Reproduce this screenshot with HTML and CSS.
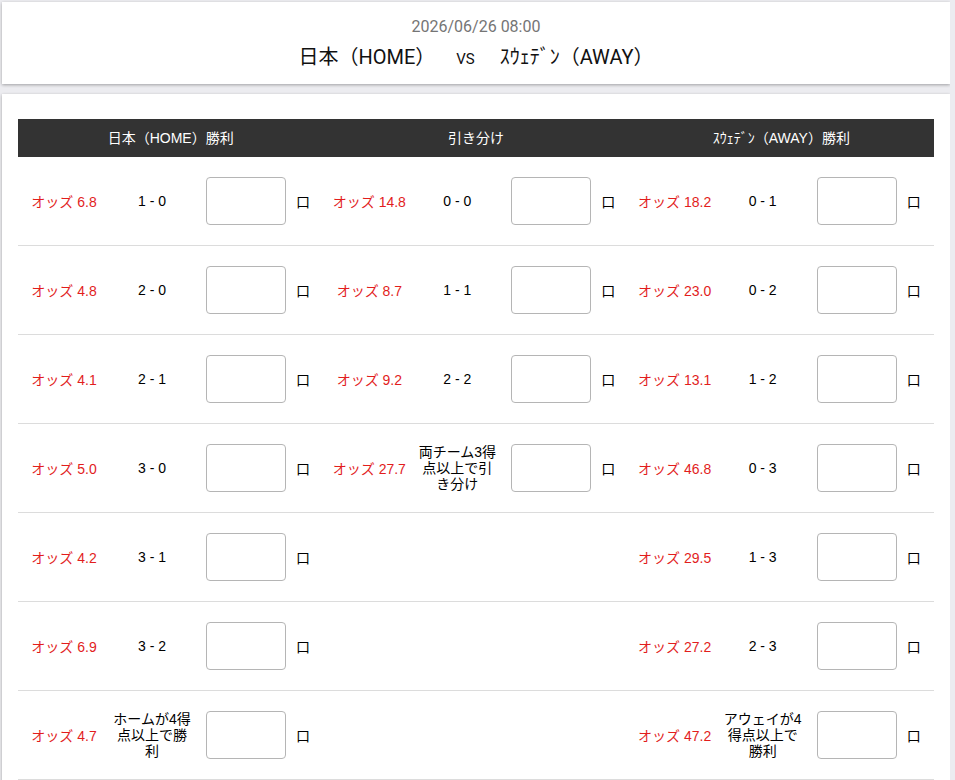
FILE: index.html
```html
<!DOCTYPE html>
<html lang="ja">
<head>
<meta charset="utf-8">
<title>日本 vs スウェーデン</title>
<link rel="stylesheet" href="styles.css">
</head>
<body>
<div class="card match">
  <div class="date">2026/06/26 08:00</div>
  <div class="teams"><span class="team">日本（HOME）</span><span class="vs">VS</span><span class="team">ｽｳｪﾃﾞﾝ（AWAY）</span></div>
</div>
<div class="card board">
  <div class="thead">
    <div class="th">日本（HOME）勝利</div>
    <div class="th">引き分け</div>
    <div class="th">ｽｳｪﾃﾞﾝ（AWAY）勝利</div>
  </div>

  <div class="row">
    <div class="grp"><div class="odds">オッズ 6.8</div><div class="score">1 - 0</div><div class="inp"><div class="box"></div></div><div class="chk">口</div></div>
    <div class="grp"><div class="odds">オッズ 14.8</div><div class="score">0 - 0</div><div class="inp"><div class="box"></div></div><div class="chk">口</div></div>
    <div class="grp"><div class="odds">オッズ 18.2</div><div class="score">0 - 1</div><div class="inp"><div class="box"></div></div><div class="chk">口</div></div>
  </div>
  <div class="row">
    <div class="grp"><div class="odds">オッズ 4.8</div><div class="score">2 - 0</div><div class="inp"><div class="box"></div></div><div class="chk">口</div></div>
    <div class="grp"><div class="odds">オッズ 8.7</div><div class="score">1 - 1</div><div class="inp"><div class="box"></div></div><div class="chk">口</div></div>
    <div class="grp"><div class="odds">オッズ 23.0</div><div class="score">0 - 2</div><div class="inp"><div class="box"></div></div><div class="chk">口</div></div>
  </div>
  <div class="row">
    <div class="grp"><div class="odds">オッズ 4.1</div><div class="score">2 - 1</div><div class="inp"><div class="box"></div></div><div class="chk">口</div></div>
    <div class="grp"><div class="odds">オッズ 9.2</div><div class="score">2 - 2</div><div class="inp"><div class="box"></div></div><div class="chk">口</div></div>
    <div class="grp"><div class="odds">オッズ 13.1</div><div class="score">1 - 2</div><div class="inp"><div class="box"></div></div><div class="chk">口</div></div>
  </div>
  <div class="row">
    <div class="grp"><div class="odds">オッズ 5.0</div><div class="score">3 - 0</div><div class="inp"><div class="box"></div></div><div class="chk">口</div></div>
    <div class="grp"><div class="odds">オッズ 27.7</div><div class="score">両チーム3得点以上で引き分け</div><div class="inp"><div class="box"></div></div><div class="chk">口</div></div>
    <div class="grp"><div class="odds">オッズ 46.8</div><div class="score">0 - 3</div><div class="inp"><div class="box"></div></div><div class="chk">口</div></div>
  </div>
  <div class="row">
    <div class="grp"><div class="odds">オッズ 4.2</div><div class="score">3 - 1</div><div class="inp"><div class="box"></div></div><div class="chk">口</div></div>
    <div class="grp"></div>
    <div class="grp"><div class="odds">オッズ 29.5</div><div class="score">1 - 3</div><div class="inp"><div class="box"></div></div><div class="chk">口</div></div>
  </div>
  <div class="row">
    <div class="grp"><div class="odds">オッズ 6.9</div><div class="score">3 - 2</div><div class="inp"><div class="box"></div></div><div class="chk">口</div></div>
    <div class="grp"></div>
    <div class="grp"><div class="odds">オッズ 27.2</div><div class="score">2 - 3</div><div class="inp"><div class="box"></div></div><div class="chk">口</div></div>
  </div>
  <div class="row">
    <div class="grp"><div class="odds">オッズ 4.7</div><div class="score">ホームが4得点以上で勝利</div><div class="inp"><div class="box"></div></div><div class="chk">口</div></div>
    <div class="grp"></div>
    <div class="grp"><div class="odds">オッズ 47.2</div><div class="score">アウェイが4得点以上で勝利</div><div class="inp"><div class="box"></div></div><div class="chk">口</div></div>
  </div>
</div>
</body>
</html>
```

FILE: styles.css
```css
html, body {
  margin: 0;
  padding: 0;
}
body {
  background: #ececf0;
  padding: 2px 0 0 2px;
  width: 948px;
  font-family: "Liberation Sans", "Noto Sans CJK JP", sans-serif;
  color: #000;
}
.card {
  background: #fff;
  box-shadow: 0 1px 3px rgba(0, 0, 0, 0.32);
}
.match {
  height: 82px;
  box-sizing: border-box;
  padding-top: 15px;
  text-align: center;
  font-family: Roboto, "Noto Sans CJK JP", sans-serif;
}
.date {
  font-size: 16px;
  line-height: 20px;
  color: #757575;
}
.teams {
  margin-top: 6px;
  font-size: 20px;
  line-height: 28px;
  color: #111;
}
.vs {
  font-size: 15px;
  margin: 0 25px 0 21px;
}
.board {
  margin-top: 10px;
  padding: 25px 16px 0 16px;
  height: 700px;
}
.thead {
  display: grid;
  grid-template-columns: 1fr 1fr 1fr;
  height: 38px;
  box-sizing: border-box;
  padding-bottom: 3px;
  background: #333;
  color: #fff;
  font-size: 14px;
}
.th {
  display: flex;
  align-items: center;
  justify-content: center;
}
.row {
  display: grid;
  grid-template-columns: 1fr 1fr 1fr;
  height: 89px;
  box-sizing: border-box;
  border-bottom: 1px solid #dcdcdc;
  font-size: 14px;
}
.grp {
  display: flex;
  align-items: center;
}
.odds {
  width: 92px;
  text-align: center;
  color: #e21d1d;
}
.score {
  width: 84px;
  box-sizing: border-box;
  padding: 0 3px;
  text-align: center;
  line-height: 16px;
}
.inp {
  width: 104px;
  display: flex;
  justify-content: center;
}
.box {
  width: 80px;
  height: 48px;
  box-sizing: border-box;
  border: 1px solid #b5b5b5;
  border-radius: 4px;
  background: #fff;
}
.chk {
  width: 14px;
  margin-left: -2px;
  font-family: "Noto Sans CJK JP", sans-serif;
  font-size: 14px;
  text-align: center;
}
```
